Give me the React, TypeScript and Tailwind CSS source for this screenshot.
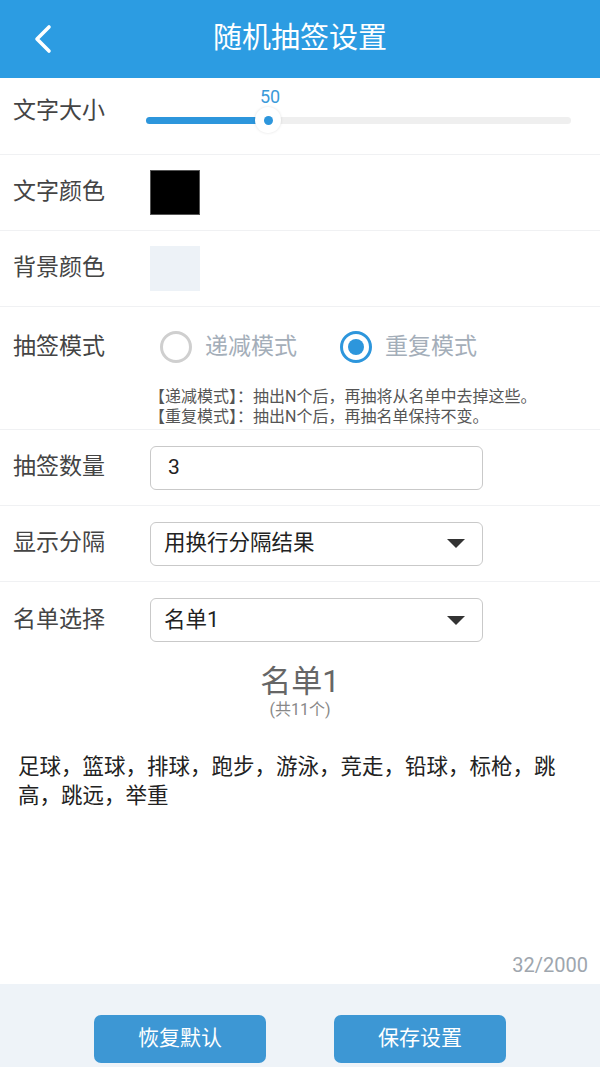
import React from 'react';

const font = { fontFamily: "Roboto, 'Noto Sans CJK SC', sans-serif" };

function Caret() {
  return (
    <svg width="18" height="9" viewBox="0 0 18 9" className="mr-[17px]">
      <path d="M0 0 H18 L9 9 Z" fill="#333" />
    </svg>
  );
}

function Row({ label, children, last }: { label: string; children: React.ReactNode; last?: boolean }) {
  return (
    <div className={`flex items-center h-[76px] px-[13px] ${last ? '' : 'border-b border-[#f0f1f3]'}`}>
      <div className="w-[137px] shrink-0 text-[23px] text-[#444]">{label}</div>
      {children}
    </div>
  );
}

function Radio({ checked, label }: { checked?: boolean; label: string }) {
  return (
    <div className="flex items-center">
      <div
        className={`w-[32px] h-[32px] rounded-full flex items-center justify-center border-[3px] ${
          checked ? 'border-[#2d96dc]' : 'border-[#cfcfcf]'
        }`}
      >
        {checked && <div className="w-[16px] h-[16px] rounded-full bg-[#2d96dc]" />}
      </div>
      <span className="ml-[13px] text-[23px] text-[#a4aeb9]">{label}</span>
    </div>
  );
}

export default function App() {
  return (
    <div className="h-[1067px] flex flex-col bg-white overflow-hidden" style={font}>
      {/* header */}
      <div className="h-[78px] shrink-0 bg-[#2c9ce2] grid grid-cols-[90px_1fr_90px] items-center">
        <div className="pl-[33px]">
          <svg width="20" height="30" viewBox="0 0 20 30">
            <path d="M16 3 L4 15 L16 27" fill="none" stroke="white" strokeWidth="3.6" strokeLinecap="round" strokeLinejoin="round" />
          </svg>
        </div>
        <div className="text-center text-white text-[29px]">随机抽签设置</div>
        <div />
      </div>

      {/* 文字大小 */}
      <div className="flex items-start h-[77px] px-[13px] border-b border-[#f0f1f3]">
        <div className="w-[133px] shrink-0 pt-[16px] text-[23px] text-[#444]">文字大小</div>
        <div className="flex-1 mr-[16px] pt-[6px]">
          <div className="relative h-[50px]">
            <div className="absolute left-[100px] top-[2px] w-[48px] text-center text-[18px] leading-[22px] text-[#3a9ad9]">50</div>
            <div className="absolute left-0 right-0 top-[33px] h-[7px] rounded-full bg-[#efefef]">
              <div className="h-full w-[122px] rounded-full bg-[#2d96dc]" />
            </div>
            <div className="absolute left-[109px] top-[23px] w-[26px] h-[26px] rounded-full bg-white shadow-[0_0_3px_rgba(0,0,0,0.12)] flex items-center justify-center">
              <div className="w-[9px] h-[9px] rounded-full bg-[#2d96dc]" />
            </div>
          </div>
        </div>
      </div>

      <Row label="文字颜色">
        <div className="w-[50px] h-[45px] bg-black border border-[#555]" />
      </Row>
      <Row label="背景颜色">
        <div className="w-[50px] h-[45px] bg-[#edf2f7]" />
      </Row>

      {/* 抽签模式 */}
      <div className="h-[123px] border-b border-[#f0f1f3] px-[13px] flex flex-col">
        <div className="flex items-center h-[80px]">
          <div className="w-[147px] shrink-0 text-[23px] text-[#444]">抽签模式</div>
          <Radio label="递减模式" />
          <div className="w-[43px]" />
          <Radio checked label="重复模式" />
        </div>
        <div className="pl-[136px] text-[16px] leading-[20px] text-[#555]">
          <div>【递减模式】：抽出N个后，再抽将从名单中去掉这些。</div>
          <div>【重复模式】：抽出N个后，再抽名单保持不变。</div>
        </div>
      </div>

      <Row label="抽签数量">
        <div className="w-[333px] h-[44px] rounded-[6px] border-[1.5px] border-[#c9c9c9] flex items-center pl-[17px] text-[21px] text-[#222]">
          3
        </div>
      </Row>
      <Row label="显示分隔">
        <div className="w-[333px] h-[44px] rounded-[6px] border-[1.5px] border-[#c9c9c9] flex items-center justify-between pl-[13px] text-[21.5px] text-[#222]">
          <span>用换行分隔结果</span>
          <Caret />
        </div>
      </Row>
      <Row label="名单选择" last>
        <div className="w-[333px] h-[44px] rounded-[6px] border-[1.5px] border-[#c9c9c9] flex items-center justify-between pl-[13px] text-[21.5px] text-[#222]">
          <span>名单1</span>
          <Caret />
        </div>
      </Row>

      {/* list */}
      <div className="flex-1 flex flex-col">
        <div className="mt-[6px] text-center text-[31px] leading-[36px] text-[#666]">名单1</div>
        <div className="text-center text-[16px] leading-[20px] text-[#888]">(共11个)</div>
        <div className="mt-[32px] pl-[18px] pr-[17px] text-[21.5px] leading-[29px] text-[#222]">
          足球，篮球，排球，跑步，游泳，竞走，铅球，标枪，跳高，跳远，举重
        </div>
        <div className="flex-1" />
        <div className="text-right pr-[12px] pb-[7px] text-[20px] leading-[24px] text-[#9ea6ae]">32/2000</div>
      </div>

      {/* footer */}
      <div className="h-[83px] shrink-0 bg-[#eef3f8] flex justify-center gap-[68px] pt-[31px]">
        <button className="w-[172px] h-[48px] rounded-[7px] bg-[#3d97d4] text-white text-[21px]">恢复默认</button>
        <button className="w-[172px] h-[48px] rounded-[7px] bg-[#3d97d4] text-white text-[21px]">保存设置</button>
      </div>
    </div>
  );
}
